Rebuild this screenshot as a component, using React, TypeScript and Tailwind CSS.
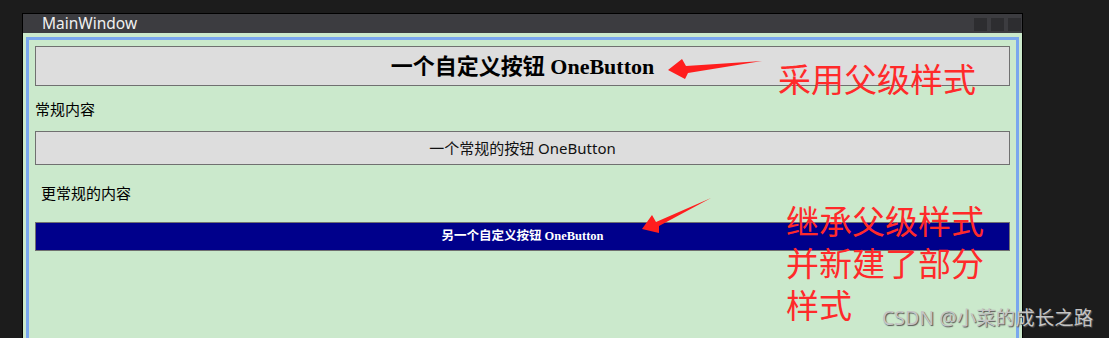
import React from 'react';

const cjkSans = { fontFamily: '"Noto Sans", "Noto Sans CJK SC", sans-serif' };
const cjkSerif = { fontFamily: '"Liberation Serif", "Noto Sans CJK SC", serif' };

const App: React.FC = () => {
  return (
    <div className="relative w-[1109px] h-[338px] overflow-hidden bg-[#1c1c1c]">
      <div className="pt-[13px] pl-[22px]">
        {/* Window */}
        <div className="w-[1001px] h-[325px] border border-b-0 border-black bg-[#3c3c40] flex flex-col">
          {/* Title bar */}
          <div className="h-[19px] flex items-center justify-between shrink-0">
            <span className="pl-[19px] text-[15.5px] leading-none text-[#f0f0f0]" style={cjkSans}>
              MainWindow
            </span>
            <div className="flex gap-[4px] pr-[1px] pt-[2px]">
              <div className="w-[13px] h-[13px] bg-[#2d2d30]" />
              <div className="w-[13px] h-[13px] bg-[#2d2d30]" />
              <div className="w-[13px] h-[13px] bg-[#2d2d30]" />
            </div>
          </div>

          {/* Client area */}
          <div className="flex-1 bg-[#cbe9cc] px-[3px] pt-[4px]">
            <div className="h-full border-[3px] border-b-0 border-[#7aa7ee] px-[6px] pt-[6px]" style={cjkSans}>
              <div className="h-[40px] bg-[#dddddd] border border-[#707070] flex items-center justify-center">
                <span className="text-[22px] font-bold text-black" style={cjkSerif}>
                  一个自定义按钮 OneButton
                </span>
              </div>

              <div className="h-[45px] flex items-center pt-[1px] text-[15px] text-black">常规内容</div>

              <div className="h-[34px] bg-[#dddddd] border border-[#707070] flex items-center justify-center text-[15px] text-[#111]">
                一个常规的按钮 OneButton
              </div>

              <div className="h-[57px] flex items-center pl-[6px] text-[15px] text-black">更常规的内容</div>

              <div className="h-[29px] bg-[#00008b] border border-[#707070] flex items-center justify-center">
                <span className="text-[12.5px] font-bold text-white" style={cjkSerif}>
                  另一个自定义按钮 OneButton
                </span>
              </div>
            </div>
          </div>
        </div>
      </div>

      {/* Annotation arrows */}
      <svg className="absolute left-0 top-0" width="1109" height="338" viewBox="0 0 1109 338">
        <polygon points="668,70 682,59 686,66 762,61 688,73 685,79" fill="#ff1e1e" />
        <polygon points="642,229 652,215 656,222 711,198 659,226 659,233" fill="#ff1e1e" />
      </svg>

      {/* Annotation text */}
      <div
        className="absolute left-[778px] top-[59px] text-[33px] leading-[42px] text-[#ff2a2a]"
        style={cjkSans}
      >
        采用父级样式
      </div>
      <div
        className="absolute left-[786px] top-[201px] text-[33px] leading-[42px] text-[#ff2a2a]"
        style={cjkSans}
      >
        <div>继承父级样式</div>
        <div>并新建了部分</div>
        <div>样式</div>
      </div>

      {/* Watermark */}
      <div
        className="absolute left-[882px] top-[305px] text-[19.5px] leading-[26px] text-[#c4c4c4] [text-shadow:1px_1px_1px_#555]"
        style={cjkSans}
      >
        CSDN @小菜的成长之路
      </div>
    </div>
  );
};

export default App;
